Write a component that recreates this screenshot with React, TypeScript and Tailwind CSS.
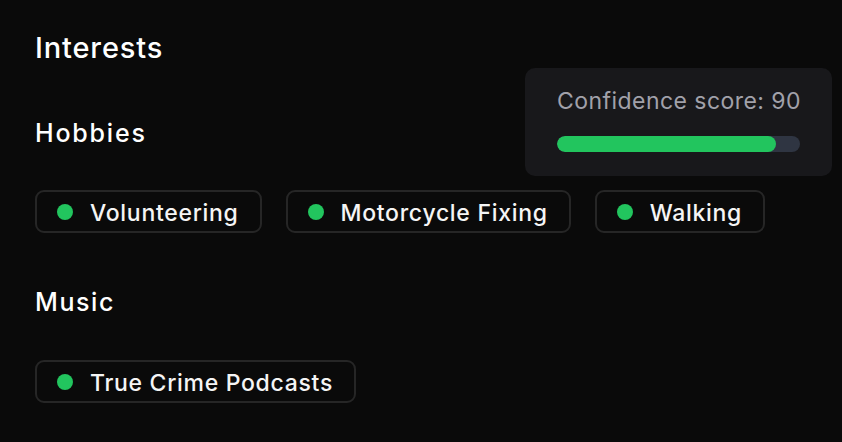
import React from "react";

function Chip({ label }: { label: string }) {
  return (
    <div className="flex h-[43px] items-center gap-[17px] rounded-[9px] border-2 border-[#262626] pl-[20px] pr-[21px]">
      <span className="h-[16px] w-[16px] rounded-full bg-[#22c55e]" />
      <span className="mt-[4px] whitespace-nowrap text-[23px] font-[550] leading-[23px] tracking-[0.7px] text-[#f5f5f5]">{label}</span>
    </div>
  );
}

export default function App() {
  return (
    <div
      className="relative h-[442px] w-[842px] overflow-hidden bg-[#0a0a0a] text-white"
      style={{ fontFamily: "Inter, 'Noto Sans', sans-serif" }}
    >
      <div className="flex flex-col items-start px-[35px] pt-[30px]">
        <h1 className="text-[29px] font-[550] leading-[36px] tracking-[0.85px]">Interests</h1>
        <h2 className="mt-[52px] text-[25px] font-[550] leading-[30px] tracking-[1.8px]">Hobbies</h2>
        <div className="mt-[42px] flex gap-[24px]">
          <Chip label="Volunteering" />
          <Chip label="Motorcycle Fixing" />
          <Chip label="Walking" />
        </div>
        <h2 className="mt-[54px] text-[25px] font-[550] leading-[30px] tracking-[1.6px]">Music</h2>
        <div className="mt-[43px] flex gap-[24px]">
          <Chip label="True Crime Podcasts" />
        </div>
      </div>
      <div className="absolute left-[525px] top-[68px] flex h-[108px] w-[307px] flex-col rounded-[10px] bg-[#18181b] px-[32px] pt-[19px]">
        <div className="whitespace-nowrap text-[23px] leading-[28px] tracking-[0.45px] text-[#a1a1aa]">Confidence score: 90</div>
        <div className="mt-[21px] h-[16px] w-[243px] overflow-hidden rounded-full bg-[#2f3542]">
          <div className="h-full rounded-full bg-[#22c55e]" style={{ width: "90%" }} />
        </div>
      </div>
    </div>
  );
}
